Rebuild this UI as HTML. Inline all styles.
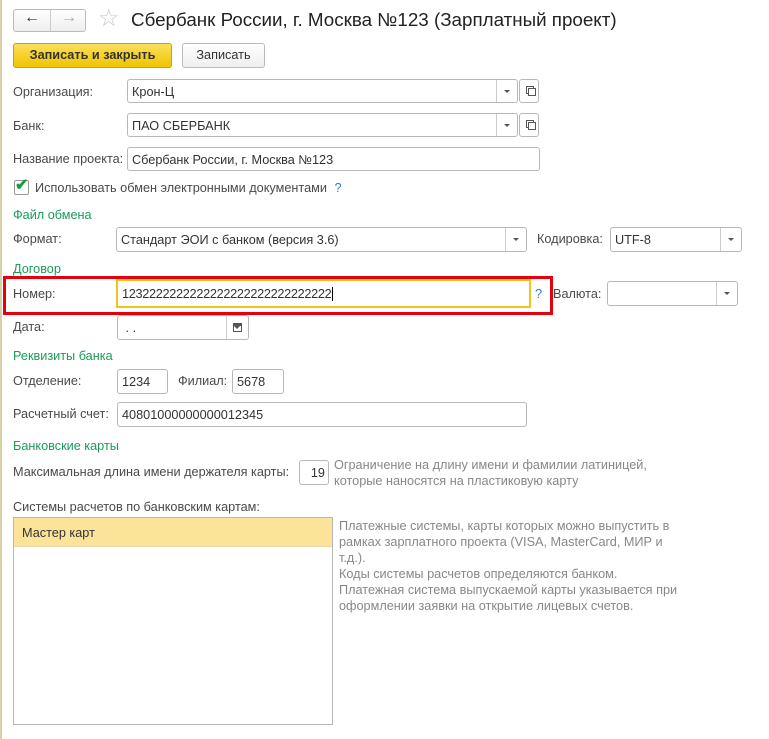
<!DOCTYPE html><html><head><meta charset="utf-8"><style>
body{margin:0;width:769px;height:739px;background:#fff;position:relative;overflow:hidden;font-family:"Liberation Sans",Arial,sans-serif;font-size:12.7px;color:#4a4a4a}
.a{position:absolute;white-space:nowrap}
.l{position:absolute;white-space:nowrap;line-height:16px}
.g{position:absolute;color:#1a9c5a;line-height:16px;white-space:nowrap}
.f{position:absolute;border:1px solid #b8b8b8;border-radius:3px;background:#fff;box-sizing:border-box;color:#333;padding-left:4px;line-height:24px;white-space:nowrap}
.dd{position:absolute;right:0;top:0;bottom:0;width:20px;border-left:1px solid #ccc}
.dd:after{content:"";position:absolute;left:7px;top:10px;border:3px solid transparent;border-top:3px solid #555}
.ob{position:absolute;width:20px;height:24px;border:1px solid #b8b8b8;border-radius:3px;box-sizing:border-box}
.ob:after{content:"";position:absolute;left:6px;top:6px;width:6px;height:6px;border:1px solid #555}
.ob:before{content:"";position:absolute;left:8px;top:8px;width:6px;height:6px;border:1px solid #555;background:#fff;z-index:1}
</style></head><body>
<div class="a" style="left:0;top:0;width:2px;height:739px;background:#d8d0a8"></div>
<div class="a" style="left:13px;top:9px;width:73px;height:23px;border:1px solid #bbb;border-radius:3px;background:linear-gradient(#fff,#eee);box-sizing:border-box"></div>
<div class="a" style="left:50px;top:10px;width:1px;height:21px;background:#ccc"></div>
<div class="a" style="left:24px;top:9px;font-size:16px;color:#333;font-weight:bold">&#8592;</div>
<div class="a" style="left:61px;top:9px;font-size:16px;color:#aaa;font-weight:bold">&#8594;</div>
<div class="a" style="left:98px;top:4px;font-size:24px;color:#c8c8c8">&#9734;</div>
<div class="a" style="left:131px;top:9px;font-size:18.8px;color:#222">Сбербанк России, г. Москва №123 (Зарплатный проект)</div>
<div class="a" style="left:13px;top:43px;width:159px;height:25px;background:linear-gradient(#fbe05a,#f0c400);border:1px solid #c9a400;border-radius:3px;box-sizing:border-box;text-align:center;line-height:23px;font-weight:bold;color:#333">Записать и закрыть</div>
<div class="a" style="left:182px;top:43px;width:83px;height:25px;background:linear-gradient(#fff,#eee);border:1px solid #bbb;border-radius:3px;box-sizing:border-box;text-align:center;line-height:23px;color:#333">Записать</div>
<div class="l" style="left:13px;top:84px">Организация:</div>
<div class="f" style="left:127px;top:79px;width:391px;height:24px">Крон-Ц<div class="dd"></div></div>
<div class="ob" style="left:519px;top:79px"></div>
<div class="l" style="left:13px;top:118px">Банк:</div>
<div class="f" style="left:127px;top:113px;width:391px;height:24px">ПАО СБЕРБАНК<div class="dd"></div></div>
<div class="ob" style="left:519px;top:113px"></div>
<div class="l" style="left:13px;top:151px">Название проекта:</div>
<div class="f" style="left:127px;top:147px;width:413px;height:24px">Сбербанк России, г. Москва №123</div>
<div class="a" style="left:14px;top:180px;width:15px;height:15px;border:1px solid #999;border-radius:2px;box-sizing:border-box"></div>
<div class="a" style="left:15px;top:175px;font-size:16px;color:#1a9c3a;font-weight:bold">&#10004;</div>
<div class="l" style="left:35px;top:180px">Использовать обмен электронными документами <span style="color:#2a7fd4;margin-left:4px">?</span></div>
<div class="g" style="left:13px;top:207px">Файл обмена</div>
<div class="l" style="left:13px;top:231px">Формат:</div>
<div class="f" style="left:116px;top:227px;width:411px;height:25px">Стандарт ЭОИ с банком (версия 3.6)<div class="dd"></div></div>
<div class="l" style="left:537px;top:231px">Кодировка:</div>
<div class="f" style="left:610px;top:227px;width:132px;height:25px">UTF-8<div class="dd"></div></div>
<div class="g" style="left:13px;top:261px">Договор</div>
<div class="a" style="left:3px;top:276px;width:550px;height:39px;border:3px solid #e3000f;box-sizing:border-box"></div>
<div class="l" style="left:13px;top:286px">Номер:</div>
<div class="f" style="left:116px;top:279px;width:415px;height:29px;border:2px solid #f2c21d;border-radius:0;line-height:26px;letter-spacing:-0.3px">1232222222222222222222222222222<span style="border-left:1px solid #000;margin-left:1px"></span></div>
<div class="l" style="left:535px;top:286px;color:#2a7fd4">?</div>
<div class="l" style="left:553px;top:286px">Валюта:</div>
<div class="f" style="left:607px;top:281px;width:131px;height:25px"><div class="dd"></div></div>
<div class="l" style="left:13px;top:319px">Дата:</div>
<div class="f" style="left:117px;top:315px;width:132px;height:25px">&nbsp;. .<div class="dd" style="width:21px"><span style="position:absolute;left:6px;top:7px;width:9px;height:9px;border:1px solid #555;border-top:3px solid #555;box-sizing:border-box"></span></div></div>
<div class="g" style="left:13px;top:348px">Реквизиты банка</div>
<div class="l" style="left:13px;top:373px">Отделение:</div>
<div class="f" style="left:117px;top:369px;width:51px;height:25px">1234</div>
<div class="l" style="left:178px;top:373px">Филиал:</div>
<div class="f" style="left:232px;top:369px;width:52px;height:25px">5678</div>
<div class="l" style="left:13px;top:406px">Расчетный счет:</div>
<div class="f" style="left:117px;top:402px;width:410px;height:25px">40801000000000012345</div>
<div class="g" style="left:13px;top:438px">Банковские карты</div>
<div class="l" style="left:13px;top:464px">Максимальная длина имени держателя карты:</div>
<div class="f" style="left:299px;top:460px;width:30px;height:25px;text-align:right;padding-right:3px">19</div>
<div class="l" style="left:334px;top:457px;color:#888">Ограничение на длину имени и фамилии латиницей,<br>которые наносятся на пластиковую карту</div>
<div class="l" style="left:13px;top:499px">Системы расчетов по банковским картам:</div>
<div class="a" style="left:13px;top:517px;width:320px;height:208px;border:1px solid #b8b8b8;box-sizing:border-box"><div style="height:28px;background:#fbe49a;border-bottom:1px solid #e6d8a8;line-height:30px;padding-left:8px;color:#333">Мастер карт</div></div>
<div class="l" style="left:339px;top:518px;color:#888">Платежные системы, карты которых можно выпустить в<br>рамках зарплатного проекта (VISA, MasterCard, МИР и<br>т.д.).<br>Коды системы расчетов определяются банком.<br>Платежная система выпускаемой карты указывается при<br>оформлении заявки на открытие лицевых счетов.</div>
</body></html>
